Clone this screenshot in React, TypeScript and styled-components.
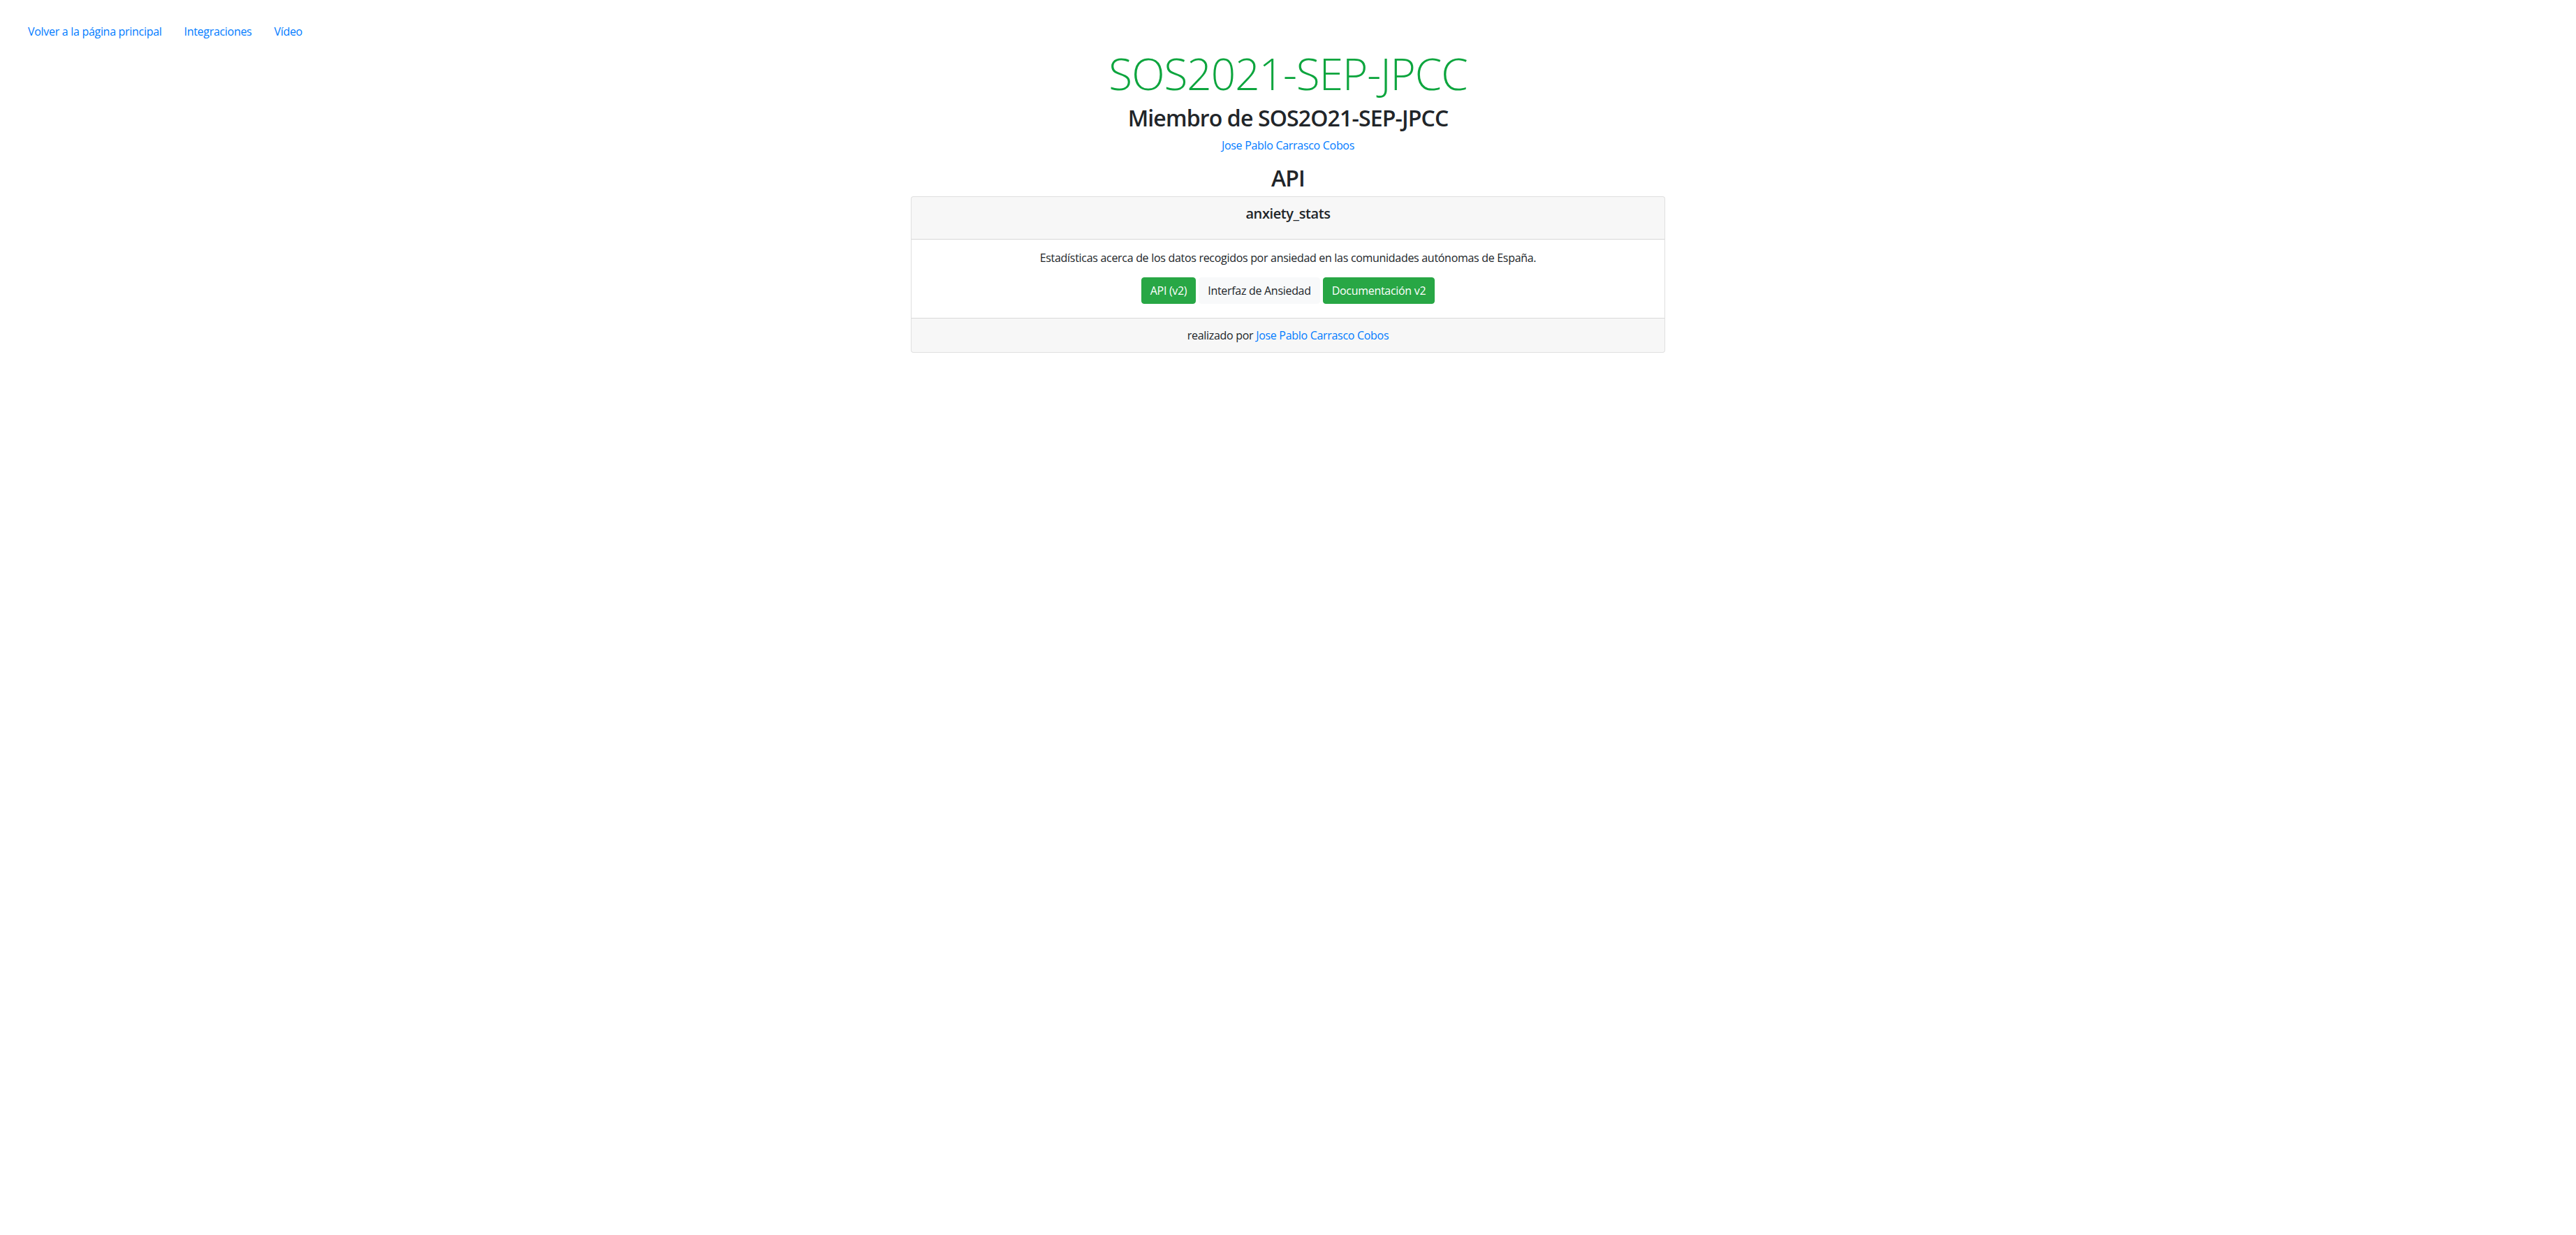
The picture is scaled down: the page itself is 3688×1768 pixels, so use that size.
import React from "react";
import styled, { createGlobalStyle } from "styled-components";

const GlobalStyle = createGlobalStyle`
  *, *::before, *::after { box-sizing: border-box; }
  html, body {
    margin: 0;
    padding: 0;
    background: #ffffff;
  }
  body {
    font-family: "Open Sans", "Noto Sans", "Liberation Sans", sans-serif;
    font-size: 16px;
    line-height: 24px;
    color: #212529;
  }
`;

const Page = styled.div`
  display: flex;
  flex-direction: column;
  min-height: 100vh;
`;

const Nav = styled.nav`
  display: flex;
  flex-direction: row;
  padding: 25px 24px 0;
`;

const NavLink = styled.a`
  display: block;
  padding: 8px 16px;
  font-size: 16px;
  line-height: 24px;
  color: #007bff;
  text-decoration: none;
  letter-spacing: -0.3px;
`;

const Main = styled.main`
  width: 1080px;
  margin: 0 auto;
  display: flex;
  flex-direction: column;
  align-items: stretch;
  text-align: center;
`;

const Title = styled.h1`
  margin: 2px 0 6px;
  font-size: 62px;
  line-height: 76.8px;
  font-weight: 300;
  color: #0da53e;
  letter-spacing: -1px;
`;

const Heading = styled.h2<{ $gap: number }>`
  margin: 0 0 ${(p) => p.$gap}px;
  font-size: 32px;
  line-height: 38.4px;
  font-weight: 600;
  color: #212529;
  letter-spacing: -0.85px;
`;

const Byline = styled.p`
  margin: 0 0 16px;
  font-size: 16px;
  line-height: 24px;
`;

const Link = styled.a`
  color: #007bff;
  text-decoration: none;
  letter-spacing: -0.3px;
`;

const Card = styled.section`
  border: 1px solid rgba(0, 0, 0, 0.125);
  border-radius: 4px;
  overflow: hidden;
  background: #ffffff;
`;

const CardHeader = styled.header`
  padding: 12px 20px 12px;
  background: rgba(0, 0, 0, 0.03);
  border-bottom: 1px solid rgba(0, 0, 0, 0.125);
`;

const CardTitle = styled.h5`
  margin: 0 0 12px;
  font-size: 20px;
  line-height: 24px;
  font-weight: 600;
  letter-spacing: -0.4px;
`;

const CardBody = styled.div`
  padding: 14px 20px 20px;
`;

const CardText = styled.p`
  margin: 0 0 16px;
  font-size: 16px;
  line-height: 24px;
  letter-spacing: -0.3px;
`;

const ButtonRow = styled.div`
  display: flex;
  justify-content: center;
  gap: 4px;
`;

const Button = styled.a<{ $variant: "success" | "light" }>`
  display: inline-block;
  padding: 6px 12px;
  font-size: 16px;
  line-height: 24px;
  border-radius: 4px;
  border: 1px solid ${(p) => (p.$variant === "success" ? "#28a745" : "#f8f9fa")};
  background: ${(p) => (p.$variant === "success" ? "#28a745" : "#f8f9fa")};
  color: ${(p) => (p.$variant === "success" ? "#ffffff" : "#212529")};
  text-decoration: none;
  letter-spacing: -0.3px;
`;

const CardFooter = styled.footer`
  padding: 12px 20px;
  background: rgba(0, 0, 0, 0.03);
  border-top: 1px solid rgba(0, 0, 0, 0.125);
  font-size: 16px;
  line-height: 24px;
  letter-spacing: -0.3px;
`;

export default function App() {
  return (
    <Page>
      <GlobalStyle />
      <Nav>
        <NavLink href="#">Volver a la página principal</NavLink>
        <NavLink href="#">Integraciones</NavLink>
        <NavLink href="#">Vídeo</NavLink>
      </Nav>
      <Main>
        <Title>SOS2021-SEP-JPCC</Title>
        <Heading $gap={8}>Miembro de SOS2O21-SEP-JPCC</Heading>
        <Byline>
          <Link href="#">Jose Pablo Carrasco Cobos</Link>
        </Byline>
        <Heading $gap={6}>API</Heading>
        <Card>
          <CardHeader>
            <CardTitle>anxiety_stats</CardTitle>
          </CardHeader>
          <CardBody>
            <CardText>
              Estadísticas acerca de los datos recogidos por ansiedad en las comunidades autónomas de España.
            </CardText>
            <ButtonRow>
              <Button $variant="success" href="#">API (v2)</Button>
              <Button $variant="light" href="#">Interfaz de Ansiedad</Button>
              <Button $variant="success" href="#">Documentación v2</Button>
            </ButtonRow>
          </CardBody>
          <CardFooter>
            realizado por <Link href="#">Jose Pablo Carrasco Cobos</Link>
          </CardFooter>
        </Card>
      </Main>
    </Page>
  );
}
